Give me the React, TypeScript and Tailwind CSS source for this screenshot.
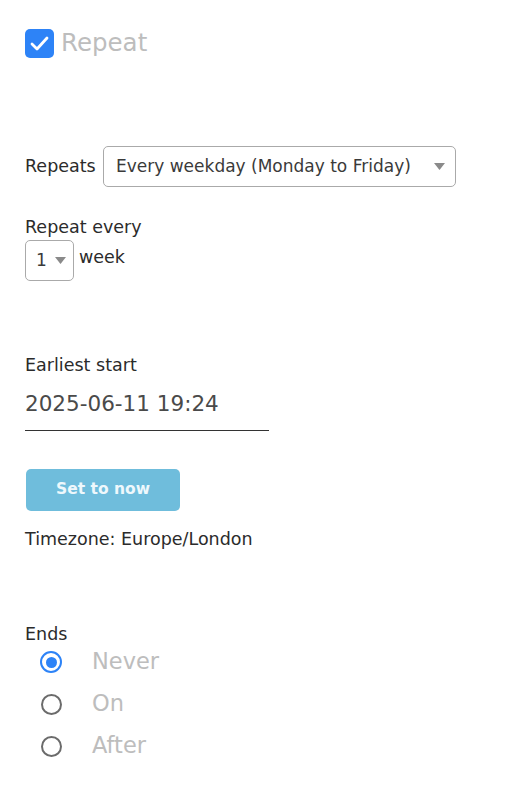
import React, { useState } from "react";

const font = { fontFamily: "'DejaVu Sans', 'Noto Sans', sans-serif" };

const Triangle = () => (
  <svg width="11" height="7" viewBox="0 0 11 7" className="shrink-0">
    <path d="M0 0 L11 0 L5.5 7 Z" fill="#8a8a8a" />
  </svg>
);

const Radio = ({ checked, label, onClick }: { checked: boolean; label: string; onClick: () => void }) => (
  <button onClick={onClick} className="flex h-[42px] items-center text-left">
    <span className="flex w-[52px] justify-center">
      {checked ? (
        <span className="flex h-[22px] w-[22px] items-center justify-center rounded-full border-[2.5px] border-[#2d83f7]">
          <span className="h-[11px] w-[11px] rounded-full bg-[#2d83f7]" />
        </span>
      ) : (
        <span className="h-[21px] w-[21px] rounded-full border-[2.5px] border-[#6b6b6b]" />
      )}
    </span>
    <span className="ml-[15px] text-[22.5px] text-[#bdbdbd]">{label}</span>
  </button>
);

export default function App() {
  const [repeat, setRepeat] = useState(true);
  const [ends, setEnds] = useState("Never");

  return (
    <div style={font} className="min-h-[800px] w-[524px] bg-white pl-[25px] text-[#2b2b2b]">
      {/* REPEAT CHECKBOX */}
      <div className="flex items-center pt-[29px]">
        <button
          onClick={() => setRepeat(!repeat)}
          className="flex h-[29px] w-[29px] items-center justify-center rounded-[5px] bg-[#2d83f7]"
        >
          {repeat && (
            <svg width="19" height="15" viewBox="0 0 19 15">
              <path d="M2 8 L7 13 L17 2" fill="none" stroke="white" strokeWidth="2.8" strokeLinecap="round" strokeLinejoin="round" />
            </svg>
          )}
        </button>
        <span className="ml-[7px] text-[24.5px] leading-none text-[#bdbdbd]">Repeat</span>
      </div>

      {/* REPEATS */}
      <div className="mt-[88px] flex items-center">
        <span className="w-[78px] text-[17.5px]">Repeats</span>
        <div className="flex h-[41px] w-[353px] items-center justify-between rounded-[5px] border border-[#aaaaaa] pl-[12px] pr-[10px]">
          <span className="text-[17px] text-[#3a3a3a]">Every weekday (Monday to Friday)</span>
          <Triangle />
        </div>
      </div>

      {/* REPEAT EVERY */}
      <div className="mt-[30px] text-[17.5px] leading-[20px]">Repeat every</div>
      <div className="mt-[3px] flex items-center">
        <div className="flex h-[41px] w-[49px] items-center gap-[8px] rounded-[5px] border border-[#aaaaaa] pl-[10px]">
          <span className="text-[17px] text-[#3a3a3a]">1</span>
          <Triangle />
        </div>
        <span className="ml-[5px] -mt-[6px] text-[17.5px]">week</span>
      </div>

      {/* EARLIEST START */}
      <div className="mt-[74px] text-[17.5px] leading-[20px]">Earliest start</div>
      <div className="mt-[14px] w-[244px] border-b-[1.5px] border-[#333] pb-[11px] text-[21.5px] leading-[30px] text-[#4a4a4a]">
        2025-06-11 19:24
      </div>

      <button className="mt-[38px] ml-px flex h-[42px] w-[154px] items-center justify-center rounded-[5px] bg-[#6fbddc] text-[15.5px] font-semibold text-[#eef8fc]">
        Set to now
      </button>
      <div className="mt-[18px] text-[17.5px] leading-[20px]">Timezone: Europe/London</div>

      {/* ENDS */}
      <div className="mt-[75px] text-[17.5px] leading-[20px]">Ends</div>
      <div className="-mt-[3px] flex flex-col">
        {["Never", "On", "After"].map((o) => (
          <Radio key={o} label={o} checked={ends === o} onClick={() => setEnds(o)} />
        ))}
      </div>
    </div>
  );
}
